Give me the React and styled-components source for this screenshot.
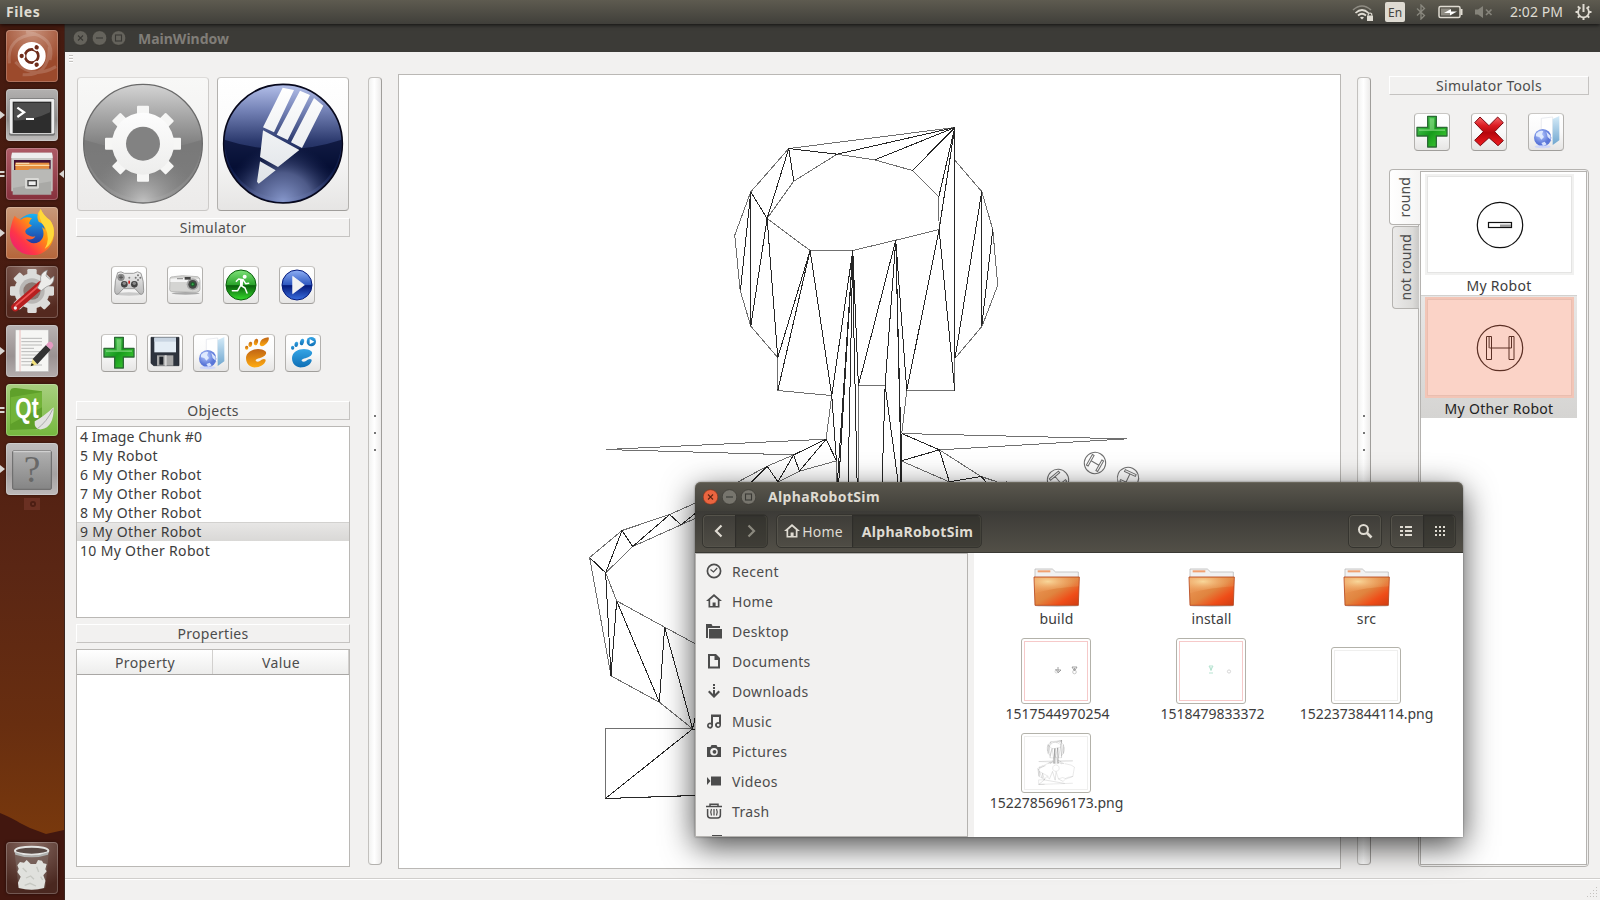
import React from 'react';
import styled, { createGlobalStyle, css } from 'styled-components';

const Global = createGlobalStyle`
  * { box-sizing: border-box; }
  body { margin: 0; background: #f2f1f0; overflow: hidden; font: 14px/19px "Noto Sans", "Open Sans", sans-serif; color: #4c4c4c; }
  svg { display: block; flex: none; }
`;

const Desktop = styled.div`
  width: 1600px; height: 900px; display: flex; flex-direction: column; position: relative; overflow: hidden;
`;
const Text = styled.span`
  white-space: nowrap; letter-spacing: ${p => p.$ls || 0}px; padding-left: ${p => p.$pl || 0}px;
`;

/* ---------- top panel ---------- */
const Panel = styled.header`
  height: 24px; flex: none; display: flex; align-items: center; justify-content: space-between;
  padding: 0 8px 0 6px; background: linear-gradient(#5e5b50, #403f3a); color: #dfdbd2;
  position: relative; box-shadow: 0 1px 4px rgba(0,0,0,.75); z-index: 1;
`;
const PanelTitle = styled(Text)`font-weight: 700; font-size: 14px; margin-top: -1px;`;
const Indicators = styled.div`display: flex; align-items: center; height: 24px;`;
const Indicator = styled.svg`margin-right: ${p => p.$gap}px;`;
const LangBadge = styled.span`
  width: 20px; height: 20px; margin-right: 11px; border-radius: 2px; background: #dfdbd2; color: #45443f;
  font: 12px/21px "Noto Sans", sans-serif; text-align: center;
`;
const Clock = styled(Text)`width: 53px; margin: -1px 12px 0 0; font-size: 14px;`;

/* ---------- body ---------- */
const Body = styled.div`flex: 1; display: flex; min-height: 0;`;
const Launcher = styled.nav`
  width: 65px; flex: none; position: relative; display: flex; flex-direction: column; align-items: flex-start;
  gap: 7px; padding: 6px 0 6px 6px; border-right: 1px solid #3b2620;
  background: linear-gradient(#461b10 0%, #4a1c11 40%, #5a2614 62%, #682e10 80%, #79390d 93%, #79390d 100%);
`;
const Ridge = styled.svg`position: absolute; left: 0; bottom: 0;`;
const LaunchRow = styled.div`
  position: relative; ${p => p.$end && 'margin-top: auto;'}
`;
const Tile = styled.div`
  width: 52px; height: 52px; border-radius: 4px; overflow: hidden; background: ${p => p.$bg};
  box-shadow: inset 0 0 0 1px rgba(255,255,255,.22), 0 0 3px rgba(0,0,0,.5);
`;
const Pip = styled.svg`position: absolute; left: -6px; top: 20px;`;
const PipRight = styled.svg`position: absolute; left: 53px; top: 21px;`;
const Ghost = styled.svg`margin: -4px 0 0 18px;`;

/* ---------- main window ---------- */
const MainWin = styled.main`flex: 1; min-width: 0; display: flex; flex-direction: column;`;
const TitleBar = styled.div`
  height: ${p => p.$h}px; flex: none; display: flex; align-items: center; gap: 4px; padding-left: 8px;
  background: ${p => (p.$active ? 'linear-gradient(#5a574e, #403f39)' : '#3c3b37')};
  color: ${p => (p.$active ? '#dfdbd2' : '#807d78')};
  font-weight: 700;
  ${p => p.$active && css`border-radius: 6px 6px 0 0; box-shadow: inset 0 1px 0 #6a675c;`}
`;
const TitleText = styled(Text)`margin-left: ${p => p.$ml}px;`;
const Work = styled.div`
  flex: 1; display: flex; align-items: flex-start; background: #f2f1f0; padding-left: 4px; position: relative;
`;
const Grip = styled.div`
  width: 4px; height: 9px; margin-top: 3px; margin-right: 3px;
  background: repeating-linear-gradient(#c4c2bf 0 1px, #fff 1px 2px, transparent 2px 3px);
`;
const Left = styled.section`width: 274px; margin-top: 25px; display: flex; flex-direction: column;`;
const Modes = styled.div`display: flex; gap: 8px; padding-left: 1px;`;
const Btn = styled.button`
  width: ${p => p.$w || 36}px; height: ${p => p.$h || 38}px; padding: 0; border-radius: 4px;
  border: 1px solid; border-color: ${p => (p.$dim ? '#dddbd9 #cdcbc9 #c8c6c4' : '#c9c7c4 #b3b1ae #a09e9b')};
  background: ${p => (p.$dim ? 'linear-gradient(#f8f8f7,#ecebea)' : 'linear-gradient(#fff,#fafafa 50%,#e6e5e4)')};
  display: flex; align-items: center; justify-content: center; overflow: hidden;
`;
const Caption = styled.div`
  height: 19px; margin-top: ${p => p.$mt || 0}px; text-align: center; line-height: 17px; letter-spacing: .3px;
  border: 1px solid; border-color: #fff #c5c3c1 #c5c3c1 #fff;
`;
const ButtonRow = styled.div`
  display: flex; gap: ${p => p.$gap}px; margin-top: ${p => p.$mt}px; padding-left: ${p => p.$pl}px;
`;
const List = styled.ul`
  list-style: none; margin: 6px 0 0; padding: 0; height: 192px; background: #fff; border: 1px solid #bab8b5; color: #3c3c3c;
`;
const Item = styled.li`
  height: 19px; line-height: 19px; padding-left: 3px;
  ${p => p.$on && 'background: linear-gradient(#e8e7e6, #d9d8d6); box-shadow: inset 0 1px #d2d1cf;'}
`;
const Table = styled.div`height: 218px; margin-top: 6px; background: #fff; border: 1px solid #bab8b5;`;
const TableHead = styled.div`
  height: 25px; display: grid; grid-template-columns: 136px 136px; text-align: center; line-height: 26px; letter-spacing: .4px;
  background: linear-gradient(#fff, #ededec); border-bottom: 1px solid #a9a7a5;
  span { border-right: 1px solid #d2d0ce; height: 24px; padding-left: 1px; }
`;
const Splitter = styled.div`
  width: 14px; height: 788px; margin: 25px 0 0 ${p => p.$ml}px; border: 1px solid; border-color: #c3c1be #a09e9b #b3b1ae #c3c1be;
  border-radius: 4px; background: linear-gradient(90deg, #f2f2f1, #fff 45%, #ecebea);
  display: flex; flex-direction: column; align-items: center; justify-content: center; gap: 15px; padding-bottom: 77px;
  i { width: 2px; height: 2px; background: #777; }
`;
const Canvas = styled.div`
  width: 943px; height: 795px; margin: 22px 0 0 16px; background: #fff; border: 1px solid #bab8b5;
`;
const Right = styled.section`width: 200px; margin: 24px 0 0 18px; display: flex; flex-direction: column;`;
const TabBox = styled.div`display: flex; margin-top: 18px; height: 698px;`;
const Tabs = styled.div`
  width: 31px; display: flex; flex-direction: column; align-items: flex-end; position: relative; z-index: 1;
`;
const Tab = styled.div`
  width: ${p => (p.$on ? 31 : 27)}px; height: ${p => p.$h}px; border: 1px solid #b5b3b0; border-right: 0;
  margin: ${p => (p.$on ? '0' : '1px 1px 0 0')};
  border-radius: 4px 0 0 4px; background: ${p => (p.$on ? 'linear-gradient(90deg,#fff,#f5f4f3)' : 'linear-gradient(90deg,#ebeae9,#dcdbd9 75%,#c9c8c6)')};
  display: flex; align-items: center; justify-content: center;
  span { writing-mode: vertical-rl; transform: rotate(180deg); line-height: 20px; letter-spacing: .1px; }
`;
const TabPane = styled.div`
  width: 171px; height: 698px; margin-left: -2px; border: 1px solid #b5b3b0; border-radius: 0 4px 4px 4px; padding: 1px; background: #f2f1f0;
`;
const TabInner = styled.div`
  width: 167px; height: 694px; border: 1px solid #b5b3b0; background: #fff;
`;
const Card = styled.div`
  width: 156px; height: 123px; padding: 2px 0 0 4px; color: ${p => (p.$on ? '#222' : '#3c3c3c')};
  ${p => p.$on && 'background: linear-gradient(#e8e7e6, #d5d4d2); box-shadow: inset 0 1px #d2d1cf;'}
`;
const Thumb = styled.div`
  width: 149px; height: 101px; border: 2px solid ${p => (p.$on ? '#f3c5b6' : '#f1f1f0')}; background: ${p => (p.$on ? '#fbd3c7' : '#fff')};
  box-shadow: inset 0 0 0 1px ${p => (p.$on ? '#e9beb0' : '#e4e4e3')}; display: flex; align-items: center; justify-content: center;
`;
const CardLabel = styled.div`text-align: center; margin-top: 1px; width: 148px; letter-spacing: .3px;`;
const StatusBar = styled.footer`
  height: 22px; flex: none; display: flex; justify-content: flex-end; align-items: flex-end; padding: 0 2px 2px 0;
  border-top: 1px solid #d0cecc; background: #f2f1f0; box-shadow: inset 0 1px #fff;
`;

/* ---------- file manager ---------- */
const Files = styled.section`
  position: absolute; left: 695px; top: 482px; width: 768px; height: 355px; display: flex; flex-direction: column;
  border-radius: 6px 6px 0 0; box-shadow: 0 9px 32px rgba(0,0,0,.72), 0 0 2px rgba(0,0,0,.5); z-index: 2;
`;
const Toolbar = styled.div`
  height: 42px; flex: none; display: flex; align-items: flex-start; padding: 3px 7px 0; color: #dfdbd2;
  background: linear-gradient(#3c3b37, #524f47); border-bottom: 1px solid #3a3934;
`;
const Group = styled.div`
  display: flex; height: 34px; margin-left: ${p => p.$ml || 0}px; border: 1px solid #35342f; border-radius: 5px;
  box-shadow: inset 0 0 0 1px #55534b; overflow: hidden;
`;
const Seg = styled.div`
  width: ${p => p.$w}px; display: flex; align-items: center; justify-content: center; gap: 2px;
  padding: 0 ${p => p.$pr || 0}px 0 ${p => p.$pl || 0}px;
  ${p => p.$press && 'background: rgba(35,34,30,.35); box-shadow: inset 1px 1px 1px #2e2d2a;'}
  ${p => p.$bold && 'font-weight: 700;'}
`;
const Split = styled.div`flex: 1; display: flex; min-height: 0; background: #fff;`;
const Places = styled.div`
  width: 273px; background: #f2f1f0; border: 1px solid #b5b3b0; padding: 2px 0 0 10px; overflow: hidden;
`;
const Place = styled.div`height: 30px; display: flex; align-items: center; gap: 10px;`;
const Gutter = styled.div`width: 6px; background: #f2f1f0;`;
const Grid = styled.div`
  display: grid; grid-template-columns: repeat(3, 155px); grid-template-rows: 75px 95px 89px; padding: 0 0 0 5px; color: #3c3c3c;
`;
const File = styled.div`display: flex; flex-direction: column; align-items: center; justify-content: flex-end;`;
const FolderArt = styled.svg`margin: 0 0 2px 0;`;
const Photo = styled.div`
  width: 70px; height: ${p => p.$h}px; padding: 2px; border: 1px solid #b3b2aa; border-radius: 3px; background: #fff; display: flex;
  margin-right: 2px;
  > div { flex: 1; border: 1px solid ${p => p.$edge}; }
`;

/* ---------- window control buttons ---------- */
const Control = ({ kind, active }) => {
  const close = active && kind === 'x';
  const fill = close ? '#ea6540' : active ? '#77756d' : '#65635c';
  const ink = close ? '#5f2512' : '#3a3935';
  return (
    <svg width="15" height="16" viewBox="0 0 15 16">
      <circle cx="7.5" cy="8" r="7.3" fill={fill} stroke={close ? '#8a3015' : '#35342f'} strokeWidth=".6" />
      <g stroke={ink} strokeWidth="1.1" fill="none">
        {kind === 'x' && <path d="M5 5.5l5 5M10 5.5l-5 5" />}
        {kind === '-' && <path d="M4 8h7" />}
        {kind === 'o' && <rect x="4.5" y="5" width="6" height="6" />}
      </g>
    </svg>
  );
};

/* ---------- wireframe mesh drawing ---------- */
const HEAD_SOFT = 'M686 115L1184 52M686 115L572 245L524 375L540 540L572 648L653 742V841L815 856M701 213L621 325L750 421H878L1007 390L1137 358L1136 260L1057 181L944 149L831 132L701 213M1184 52V150L1265 244L1298 358L1313 525L1266 648L1185 744M1184 744V841H1040M895 826H975M895 826V1116M815 856L798 987M1040 841L1025 970';
const HEAD_HARD = 'M686 115L831 132L1184 52M944 149L1184 52M1057 181L1184 52M1136 260L1184 52M1137 358L1184 52M1184 52V744M686 115L701 213M686 115L621 325L572 245M572 245L541 540M572 245V648L621 325L653 742L750 421M750 421L653 841M750 421L815 856L878 421M878 421L832 1116M878 421L836 1116M878 421L864 1116M878 421L880 600L891 1116M878 421L895 826L1007 390L975 826L966 1116M975 826L1014 1116M1007 390L1020 900V1116M1007 390L1024 1116M1007 390L1040 841L1137 358L1184 841M1265 244V648L1298 358M1265 244L1185 744M815 856L829 1052V1116';
const ARM_SOFT = 'M119 148L695 117M119 148L610 164L541 198L465 245M625 213L722 182M625 213L569 245M722 182V245M893 100L1480 116L991 149L1100 229L1142 245M891 182L1017 245';
const ARM_HARD = 'M695 117L610 164L625 213L695 117L722 182M610 164L569 245L541 198L500 245M893 100L991 149L891 182M893 100L891 245M991 149L1017 245L1100 229L1113 245';
const BODY_SOFT = 'M503 5L375 69L299 103L156 151L59 232L123 587L268 666L368 746M430 92L375 115L333 134L188 199L107 278L140 362L284 441L560 590M106 745H368M106 745V955M1308 5L1590 70L1740 160L1670 590L1400 640L1221 816M106 955L1668 900M890 60a150 150 0 1 0 10 0M900 360L1010 700L1200 640L1380 700L1668 590';
const BODY_HARD = 'M299 103L333 134L375 100M299 103L188 199L156 151L107 278L59 232M107 278L123 587L140 362L268 666L284 441L368 746L375 714L480 590L600 700L740 360L860 760L900 400M106 955L368 746L1300 910M106 955L375 946M1221 816L1000 700';

const Mesh = ({ soft = '#707070', hard = '#262626', ...rest }) => (
  <svg viewBox="399 75 941 793" fill="none" shapeRendering="crispEdges" {...rest}>
    {[
      ['translate(560.1 110.2) scale(.33333)', HEAD_SOFT, HEAD_HARD],
      ['translate(560.2 400.2) scale(.38265 .33333)', ARM_SOFT, ARM_HARD],
      ['translate(570 480.2) scale(.33333)', BODY_SOFT, BODY_HARD],
    ].map(([t, s, h]) => (
      <g key={t} transform={t}>
        <path d={s} stroke={soft} vectorEffect="non-scaling-stroke" />
        <path d={h} stroke={hard} vectorEffect="non-scaling-stroke" />
      </g>
    ))}
    <g stroke={soft} shapeRendering="auto">
      {[[1095, 463, 30], [1058, 480, 50], [1128, 478, 115]].map(([x, y, a]) => (
        <g key={x} transform={`translate(${x} ${y}) rotate(${a})`}>
          <circle r="10.7" />
          <path d="M-6.500 -6h2v12h-2zM4.500 -6h2v12h-2zM-4.500 0h9" />
        </g>
      ))}
    </g>
  </svg>
);

/* ---------- large mode icons ---------- */
const GearOrb = () => (
  <svg width="130" height="132" viewBox="234 235 390 396">
    <defs>
      <linearGradient id="gg" x2="0" y2="1"><stop offset="0" stopColor="#d4d4d4" /><stop offset=".25" stopColor="#a9a9a9" /><stop offset=".5" stopColor="#818181" /><stop offset="1" stopColor="#8b8b8b" /></linearGradient>
      <radialGradient id="gl" cx=".5" cy="1" r=".45"><stop offset="0" stopColor="#c2c2c2" /><stop offset="1" stopColor="#8a8a8a" stopOpacity="0" /></radialGradient>
      <linearGradient id="gw" x2="0" y2="1"><stop offset="0" stopColor="#fdfdfd" /><stop offset="1" stopColor="#ededec" /></linearGradient>
    </defs>
    <circle cx="429" cy="432" r="178" fill="url(#gg)" stroke="#6a6a6a" strokeWidth="4" />
    <path d="M252 420A177 177 0 0 0 606 420Q430 480 252 420Z" fill="#6e6e6e" opacity=".45" />
    <circle cx="429" cy="432" r="176" fill="url(#gl)" />
    <g fill="#f6f6f5">
      {[0, 45, 90, 135].map(a => <rect key={a} x="411" y="318" width="36" height="228" rx="3" transform={`rotate(${a} 429 432)`} />)}
      <circle cx="429" cy="432" r="93" fill="url(#gw)" />
    </g>
    <circle cx="429" cy="432" r="51" fill="#828282" />
  </svg>
);
const PencilOrb = () => (
  <svg width="130" height="132" viewBox="654 235 390 396">
    <defs>
      <linearGradient id="pg" x2="0" y2="1"><stop offset="0" stopColor="#b4c0ea" /><stop offset=".22" stopColor="#7482b6" /><stop offset=".48" stopColor="#2c3a6e" /><stop offset=".7" stopColor="#0b1845" /><stop offset="1" stopColor="#334178" /></linearGradient>
      <radialGradient id="pl" cx=".5" cy="1" r=".5"><stop offset="0" stopColor="#8798cc" /><stop offset=".5" stopColor="#5f6c9c" stopOpacity=".8" /><stop offset="1" stopColor="#1c2856" stopOpacity="0" /></radialGradient>
      <linearGradient id="pw" x2="0" y2="1"><stop offset="0" stopColor="#fff" /><stop offset="1" stopColor="#dfe3e7" /></linearGradient>
    </defs>
    <circle cx="849" cy="432" r="178" fill="url(#pg)" stroke="#07081c" strokeWidth="5" />
    <path d="M673 420A176 176 0 0 0 1025 420Q850 478 673 420Z" fill="#030b2c" opacity=".66" />
    <circle cx="849" cy="432" r="175" fill="url(#pl)" />
    <path fill="url(#pw)" d="M848 264L882 271L822 398L789 383ZM900 273L930 286L863 421L830 405ZM942 295L970 318L906 445L873 428ZM789 392L898 451L834 502L780 472ZM780 485L827 512L776 552L771 546Z" />
  </svg>
);

/* ---------- small button icons, drawn on a 108x114 board ---------- */
const Board = ({ children }) => <svg width="36" height="38" viewBox="0 0 108 114">{children}</svg>;
const Pad = () => (
  <Board>
    <defs><linearGradient id="pad" x2="0" y2="1"><stop offset="0" stopColor="#efefef" /><stop offset="1" stopColor="#b9b9b9" /></linearGradient></defs>
    <ellipse cx="54" cy="84" rx="40" ry="5" fill="#c9c9c9" />
    <path d="M20 20Q30 14 40 22H68Q80 13 90 22Q99 44 98 74Q97 88 87 84L72 68H37L22 84Q12 88 11 74Q11 42 20 20Z" fill="url(#pad)" stroke="#8a8a8a" strokeWidth="2.500" />
    <circle cx="30" cy="34" r="11" fill="#8c8c8c" /><circle cx="40" cy="55" r="10" fill="#444" /><circle cx="70" cy="55" r="10" fill="#444" />
    <circle cx="40" cy="52" r="5" fill="#8b8b8b" /><circle cx="70" cy="52" r="5" fill="#8b8b8b" />
    <circle cx="81" cy="28" r="3" fill="#777" /><circle cx="88" cy="35" r="3" fill="#777" /><circle cx="74" cy="35" r="3" fill="#777" /><circle cx="81" cy="42" r="3" fill="#777" />
    <circle cx="55" cy="35" r="3" fill="#888" /><rect x="52" y="44" width="5" height="9" fill="#c22" />
    <path d="M24 34h12M30 28v12" stroke="#555" strokeWidth="3" />
  </Board>
);
const Cam = () => (
  <Board>
    <ellipse cx="56" cy="82" rx="42" ry="4" fill="#a9a9a9" />
    <path d="M9 36Q10 32 20 32L46 29L92 32Q99 34 99 44V70Q98 78 88 79L14 77Q8 76 8 70Z" fill="#d4d4d2" stroke="#a5a5a3" strokeWidth="2" />
    <path d="M10 38Q50 33 97 39V48H10Z" fill="#f4f4f4" />
    <circle cx="77" cy="55" r="18" fill="#a8a8a8" /><circle cx="77" cy="55" r="13" fill="#454745" /><circle cx="77" cy="55" r="7" fill="#1f5c2c" /><circle cx="77" cy="55" r="3" fill="#35b04d" />
    <rect x="53" y="33" width="18" height="8" fill="#444" /><path d="M30 38h18" stroke="#999" strokeWidth="4" />
  </Board>
);
const Orb = ({ id, hi, mid, lo, glow, children }) => (
  <Board>
    <defs>
      <linearGradient id={id} x2="0" y2="1"><stop offset="0" stopColor={hi} /><stop offset=".5" stopColor={mid} /><stop offset=".52" stopColor={lo} /><stop offset="1" stopColor={glow} /></linearGradient>
    </defs>
    <circle cx="54" cy="57" r="45" fill={`url(#${id})`} stroke={lo} strokeWidth="3" />
    {children}
  </Board>
);
const Run = () => (
  <Orb id="ru" hi="#7fe37a" mid="#2aa32a" lo="#0a5f0c" glow="#35dc2c">
    <circle cx="65" cy="32" r="6" fill="#fff" />
    <path d="M40 46L47 39L60 41L68 53L77 52M58 42L53 58L66 66L72 81M53 58L44 74L28 74" fill="none" stroke="#fff" strokeWidth="4.500" strokeLinejoin="round" strokeLinecap="round" />
    <path d="M51 40L61 40L59 60L51 60Z" fill="#fff" />
  </Orb>
);
const Play = () => (
  <Orb id="pp" hi="#8fb0f5" mid="#2c56bf" lo="#04197a" glow="#3a6fe0">
    <path d="M41 31L76 57L41 83Z" fill="#f1f1f1" stroke="#fff" strokeWidth="2" />
  </Orb>
);
const Plus = () => (
  <Board>
    <defs><linearGradient id="pls" x2="1" y2="1"><stop offset="0" stopColor="#5fd66a" /><stop offset=".5" stopColor="#159a1b" /><stop offset="1" stopColor="#49d63a" /></linearGradient></defs>
    <path d="M41 10H67V43H99V69H67V102H41V69H9V43H41Z" fill="url(#pls)" stroke="#2c6b35" strokeWidth="4" strokeLinejoin="round" />
    <path d="M47 16H61V49H93V54H15V49H47Z" fill="#b6f3ae" opacity=".45" />
  </Board>
);
const Cross = () => (
  <Board>
    <defs><linearGradient id="crs" x2="0" y2="1"><stop offset="0" stopColor="#f4696b" /><stop offset=".3" stopColor="#dc1c22" /><stop offset=".55" stopColor="#b5060c" /><stop offset="1" stopColor="#f01c20" /></linearGradient></defs>
    <path d="M27 12L54 38L80 12L97 29L71 56L97 83L81 98L54 74L28 98L11 82L37 56L11 29Z" fill="url(#crs)" stroke="#7c0b12" strokeWidth="3" strokeLinejoin="round" />
  </Board>
);
const Floppy = () => (
  <Board>
    <path d="M12 10H96V95H20L12 88Z" fill="#2d333d" stroke="#1e232b" strokeWidth="2" />
    <rect x="22" y="11" width="65" height="44" fill="#e4edf5" /><rect x="22" y="11" width="65" height="12" fill="#c9d5e2" />
    <rect x="30" y="64" width="49" height="31" fill="#a8a8a8" /><rect x="37" y="68" width="12" height="24" fill="#20242b" /><path d="M56 64v31" stroke="#d7d7d7" strokeWidth="6" />
  </Board>
);
const Globe = () => (
  <Board>
    <defs>
      <linearGradient id="gf" x2="0" y2="1"><stop offset="0" stopColor="#d5ebf8" /><stop offset="1" stopColor="#6fa6cf" /></linearGradient>
      <radialGradient id="gb" cx=".4" cy=".35"><stop offset="0" stopColor="#b9ccff" /><stop offset="1" stopColor="#5a76d8" /></radialGradient>
    </defs>
    <path d="M40 16L74 12V82L40 86Z" fill="#fff" stroke="#dfe3e8" strokeWidth="2" />
    <path d="M74 18L94 9V82L74 96Z" fill="url(#gf)" />
    <circle cx="44" cy="74" r="26" fill="url(#gb)" />
    <path d="M24 62q10-12 22-8l-4 10 6 8-8 8-6-8-10-2zM55 56l13 12v12l-9-8zM40 90l10-4 6 8-10 5z" fill="#e6eeff" opacity=".9" />
    <ellipse cx="44" cy="101" rx="24" ry="5" fill="#c5d0ff" opacity=".7" />
  </Board>
);
const Foot = ({ id, a, b, play }) => (
  <Board>
    <defs><linearGradient id={id} x2="0" y2="1"><stop offset="0" stopColor={a} /><stop offset="1" stopColor={b} /></linearGradient></defs>
    <g fill={`url(#${id})`}>
      <path d="M79 52C62 38 22 46 21 72C21 92 36 102 52 100C70 98 81 86 80 77C75 73 69 76 64 80C57 85 49 83 50 78C53 72 68 73 77 65C82 60 83 56 79 52Z" />
      <ellipse cx="23" cy="41" rx="5" ry="6" /><ellipse cx="34" cy="31" rx="5.500" ry="8" transform="rotate(15 34 31)" /><ellipse cx="51" cy="24" rx="6" ry="10" transform="rotate(15 51 24)" />
      {play ? <circle cx="79" cy="23" r="14" /> : <path d="M62 30Q64 12 88 10Q92 14 86 24Q78 36 68 37Q62 36 62 30Z" />}
    </g>
    {play && <path d="M74 15L88 23L74 31Z" fill="#fff" />}
  </Board>
);

/* ---------- launcher icons, on a 156x156 board ---------- */
const L = ({ children }) => <svg width="52" height="52" viewBox="0 0 156 156">{children}</svg>;
const Dash = () => (
  <L>
    <g fill="none" stroke="#fff" opacity=".16" strokeWidth="9"><path d="M10 100Q0 20 90 12" /><path d="M60 6Q150 20 132 90" /><path d="M150 110Q80 150 28 96" /><path d="M130 50Q130 140 50 134" /></g>
    <circle cx="77" cy="78" r="42" fill="#fff" />
    <circle cx="77" cy="78" r="20" fill="none" stroke="#6e2c1a" strokeWidth="8" />
    {[60, 180, 300].map(a => <g key={a} transform={`rotate(${a} 77 78)`}><circle cx="106" cy="78" r="10" fill="#fff" /><circle cx="107" cy="78" r="6.500" fill="#6e2c1a" /></g>)}
  </L>
);
const Term = () => (
  <L>
    <rect x="9" y="28" width="138" height="112" rx="6" fill="#777" /><rect x="11" y="30" width="134" height="104" rx="4" fill="#eee" />
    <rect x="20" y="38" width="116" height="94" fill="#2d2d2d" /><path d="M24 42H132V70Q80 96 24 94Z" fill="#555" opacity=".8" />
    <path d="M34 56L54 70L34 84" fill="none" stroke="#fff" strokeWidth="7" /><path d="M60 90H84" stroke="#fff" strokeWidth="6" />
  </L>
);
const Cabinet = () => (
  <L>
    <path d="M18 14H138L140 26V130H16V26Z" fill="#c9c9c6" /><path d="M18 14H138L140 30H16Z" fill="#eee" />
    <rect x="24" y="36" width="110" height="32" fill="#413" /><rect x="28" y="44" width="102" height="26" fill="#e58c3c" /><path d="M28 52H130M30 46H70" stroke="#fbd9a4" strokeWidth="4" />
    <path d="M20 66H66L72 62H136V140H20Z" fill="#a9a9a6" /><path d="M20 66H136V100L20 120Z" fill="#b9b9b6" />
    <rect x="57" y="90" width="42" height="32" rx="4" fill="#d9d9d6" /><rect x="66" y="98" width="25" height="15" fill="#eee" stroke="#444" strokeWidth="4" />
  </L>
);
const Fox = () => (
  <L>
    <defs>
      <linearGradient id="fx" x1="1" y1="0" x2="0" y2="1"><stop offset="0" stopColor="#fff44f" /><stop offset=".4" stopColor="#ff980e" /><stop offset=".7" stopColor="#ff3647" /><stop offset="1" stopColor="#e31587" /></linearGradient>
      <linearGradient id="fb" x2="0" y2="1"><stop offset="0" stopColor="#18b3f5" /><stop offset="1" stopColor="#24309a" /></linearGradient>
    </defs>
    <circle cx="80" cy="68" r="48" fill="url(#fb)" />
    <path d="M26 26Q34 36 44 38Q60 26 78 34Q68 42 70 50L78 56Q68 62 62 66Q52 76 66 84Q78 92 88 88Q80 102 60 96Q76 116 100 104Q120 90 108 60Q112 62 116 68Q116 50 98 44Q88 24 104 6Q112 26 132 40Q146 58 144 84Q138 130 96 143Q48 150 24 118Q4 90 16 54Q18 40 26 26Z" fill="url(#fx)" />
    <path d="M104 6Q112 26 132 40Q146 58 143 84Q138 112 116 126Q134 96 118 62Q92 34 104 6Z" fill="#ffd93a" />
  </L>
);
const Settings = () => (
  <L>
    <g fill="#dcdcda">{[0, 45, 90, 135].map(a => <rect key={a} x="64" y="9" width="28" height="132" rx="4" transform={`rotate(${a} 78 75)`} />)}<circle cx="78" cy="75" r="53" /></g>
    <circle cx="78" cy="75" r="38" fill="#b9b7b5" /><circle cx="78" cy="75" r="26" fill="#8a7771" />
    <path d="M28 124L104 58" stroke="#b71f1f" strokeWidth="24" strokeLinecap="round" /><path d="M30 118L98 60" stroke="#e55" strokeWidth="5" strokeLinecap="round" />
    <circle cx="28" cy="126" r="5" fill="#eee" />
    <path d="M94 66L104 46Q100 20 124 12L120 30L132 40L144 30Q146 56 122 62L106 74Z" fill="#ececea" stroke="#888" strokeWidth="2" />
  </L>
);
const Gedit = () => (
  <L>
    <path d="M28 14H128V140H28Z" fill="#f6f6f4" stroke="#aaa" strokeWidth="2" /><path d="M42 14V140" stroke="#e9a0a0" strokeWidth="2" />
    {[40, 50, 60, 70, 80, 90, 100, 110, 120].map((y, i) => <path key={y} d={`M46 ${y}H${i % 4 === 3 ? 84 : 108}`} stroke="#9a9a9a" strokeWidth="2" />)}
    <path d="M74 124L80 102L94 118Z" fill="#f3e27a" /><path d="M80 102L120 60L134 74L94 118Z" fill="#333" /><path d="M120 60L128 51Q140 48 142 62L134 74Z" fill="#e59ac2" /><path d="M74 124L77 114L84 120Z" fill="#222" />
  </L>
);
const QtLogo = () => (
  <L>
    <path d="M12 22Q14 10 30 12L108 22V134L12 138Z" fill="#5fa02a" /><path d="M14 40L108 24V70L14 120Z" fill="#7fc043" opacity=".6" />
    <text x="28" y="101" fontFamily="Liberation Sans" fontWeight="700" fontSize="86" fill="#fff" textLength="70" lengthAdjust="spacingAndGlyphs">Qt</text>
    <path d="M143 70Q144 130 106 136Q84 138 86 112Q110 100 143 70Z" fill="#e2e2e0" /><path d="M140 76Q124 112 92 136" fill="none" stroke="#aaa" strokeWidth="3" />
  </L>
);
const Unknown = () => (
  <L>
    <defs><linearGradient id="uk" x2="0" y2="1"><stop offset="0" stopColor="#b0b0b0" /><stop offset="1" stopColor="#858585" /></linearGradient></defs>
    <rect x="20" y="24" width="116" height="115" rx="3" fill="url(#uk)" stroke="#666" strokeWidth="3" />
    <path d="M22 26H134" stroke="#ddd" strokeWidth="3" />
    <text x="78" y="117" textAnchor="middle" fontFamily="Liberation Serif" fontSize="112" fill="#686868">?</text>
  </L>
);
const Bin = () => (
  <L>
    <path d="M26 34L38 138Q78 150 118 138L128 34Z" fill="#8d8682" opacity=".35" />
    <path d="M34 70L42 60L54 62L62 54L74 66L90 66L96 54L108 56L112 64L122 66L118 82L122 88L112 100L118 116L114 138Q78 148 38 138L36 122L44 104L34 90L38 80Z" fill="#e0e1dd" />
    <path d="M50 78L62 90M92 74L98 90M60 108L74 102L84 112M104 104L110 114M56 130L72 124L90 132" stroke="#c6c8c2" strokeWidth="4" fill="none" />
    <ellipse cx="77" cy="26" rx="50" ry="12" fill="#5a4a45" stroke="#e4e4e2" strokeWidth="6" /><path d="M26 30Q76 52 128 30L126 38Q76 54 28 38Z" fill="#b0b2b0" />
  </L>
);
const APPS = [
  { Icon: Dash, bg: 'radial-gradient(circle at 50% 0,#c9937c,#9c4a2d 65%)' },
  { Icon: Term, bg: 'linear-gradient(#b3b1b0,#8d8b8a 60%,#c0bebd)', pip: 1 },
  { Icon: Cabinet, bg: 'linear-gradient(#ad5b66,#86303c)', pip: 2, focus: true },
  { Icon: Fox, bg: 'linear-gradient(#c99a7a,#b5653a)', pip: 1 },
  { Icon: Settings, bg: 'radial-gradient(circle at 50% 0,#8d6f66,#54291f 80%)' },
  { Icon: Gedit, bg: 'linear-gradient(#b9b3b3,#9a9292 60%,#b4adad)', pip: 1 },
  { Icon: QtLogo, bg: 'linear-gradient(#a9cf80,#75b83e)', pip: 2 },
  { Icon: Unknown, bg: 'linear-gradient(#bfbdbd,#a5a2a2 60%,#bdbaba)', pip: 1 },
];

/* ---------- sidebar icons ---------- */
const HomeShape = <path d="M8 1L0 8h2.500v6.500h11V8H16zM8 3.400l3.800 3.400v6.200H9.600V9.500H6.600v3.500H4.200V6.800z" fillRule="evenodd" />;
const PLACES = [
  ['Recent', <g key="i" fill="none" stroke="currentColor"><circle cx="8" cy="8" r="6.600" strokeWidth="1.700" /><path d="M4.500 6.500l3 2.500 3.700-4" strokeWidth="1.200" /></g>],
  ['Home', HomeShape],
  ['Desktop', <path key="i" d="M0 1h5.500l1 2H14v2H2v10H0zM3 6h13v9.500H3z" />],
  ['Documents', <path key="i" fillRule="evenodd" d="M2 1h8l4 4v10.500H2zM4 3v10.500h8V7H8.500V3z" />],
  ['Downloads', <path key="i" d="M7 1h2v2H7zM7 4h2v2H7zM7 7h2v4l3.500-3.500L14 9l-6 6-6-6 1.500-1.500L7 11z" />],
  ['Music', <path key="i" fillRule="evenodd" d="M5 1.500h10V12a3 3 0 1 1-2-2.800V4H7v8.500A3 3 0 1 1 5 9.800zM4 11.300a1.300 1.300 0 1 0 0 2.600 1.300 1.300 0 0 0 0-2.600zM12.200 10.800a1.300 1.300 0 1 0 0 2.600 1.300 1.300 0 0 0 0-2.600z" />],
  ['Pictures', <path key="i" fillRule="evenodd" d="M1 4h3.500L5.500 2h5l1 2H15v10H1zM8 5a3.800 3.800 0 1 0 0 7.600A3.800 3.800 0 0 0 8 5zM8 7a1.900 1.900 0 1 1 0 3.700A1.900 1.900 0 0 1 8 7z" />],
  ['Videos', <path key="i" d="M5 3.500h10v9H5zM1 4l3.500 4L1 12z" />],
  ['Trash', <g key="i" fill="none" stroke="currentColor" strokeWidth="1.500"><path d="M0 3.500h16M4 3V1.200h8V3M1.600 6v6q0 3 3 3h6.800q3 0 3-3V6" /><path d="M5.500 6q-1.500 3 0 6.500M10.500 6q1.500 3 0 6.500M8 6v6.500" strokeWidth="1.200" /></g>],
  ['Network', <path key="i" d="M6 2h10v10H6z" />],
];

const Folder = () => (
  <FolderArt width="48" height="40" viewBox="0 0 144 120">
    <defs>
      <linearGradient id="fd" x2="1" y2="1"><stop offset="0" stopColor="#f0a060" /><stop offset=".5" stopColor="#e0843f" /><stop offset=".75" stopColor="#ef4d18" /><stop offset="1" stopColor="#cf3c12" /></linearGradient>
      <radialGradient id="fh" cx=".3" cy=".25" r=".65"><stop offset="0" stopColor="#f8d79a" /><stop offset="1" stopColor="#f0a868" stopOpacity=".25" /></radialGradient>
    </defs>
    <path d="M6 34V6H58L68 15H136V34Z" fill="#f1f1f1" stroke="#bdbdbd" strokeWidth="2.500" /><path d="M14 13H52" stroke="#f0a070" strokeWidth="6" />
    <ellipse cx="72" cy="116" rx="66" ry="4" fill="#ccc" />
    <path d="M3 30H139L136 115H6Z" fill="url(#fd)" stroke="#b5451c" strokeWidth="2.500" />
    <path d="M5 32H137V58Q70 62 6 78Z" fill="url(#fh)" />
  </FolderArt>
);

const FilesWindow = () => (
  <Files>
    <TitleBar $h={29} $active>
      <Control kind="x" active /><Control kind="-" active /><Control kind="o" active />
      <TitleText $ml={8} $ls={0.35}>AlphaRobotSim</TitleText>
    </TitleBar>
    <Toolbar>
      <Group>
        <Seg $w={32}><svg width="12" height="14" viewBox="0 0 12 14" fill="none" stroke="currentColor" strokeWidth="2.200"><path d="M8.500 1.500L3 7l5.500 5.500" /></svg></Seg>
        <Seg $w={32} $press><svg width="12" height="14" viewBox="0 0 12 14" fill="none" stroke="#8b897f" strokeWidth="2.200"><path d="M3.500 1.500L9 7l-5.500 5.500" /></svg></Seg>
      </Group>
      <Group $ml={8}>
        <Seg $w={75} $pr={2}><svg width="16" height="16" viewBox="0 0 16 16" fill="currentColor">{HomeShape}</svg><Text $ls={0.2}>Home</Text></Seg>
        <Seg $w={129} $press $bold $pl={2}><Text $ls={0.3}>AlphaRobotSim</Text></Seg>
      </Group>
      <Group $ml={366}>
        <Seg $w={32} $pr={1}><svg width="16" height="16" viewBox="0 0 16 16" fill="none" stroke="currentColor"><circle cx="6.500" cy="6.500" r="4.500" strokeWidth="2" /><path d="M10 10l4.500 4.500" strokeWidth="2.600" /></svg></Seg>
      </Group>
      <Group $ml={8}>
        <Seg $w={32} $pr={2}><svg width="12" height="12" viewBox="0 0 12 12" fill="currentColor"><path d="M0 1h3v2H0zM5 1h7v2H5zM0 5h3v2H0zM5 5h7v2H5zM0 9h3v2H0zM5 9h7v2H5z" /></svg></Seg>
        <Seg $w={32} $pl={3} $press><svg width="11" height="12" viewBox="0 0 11 12" fill="currentColor"><path d="M0 1h2v2H0zM4 1h2v2H4zM8 1h2v2H8zM0 5h2v2H0zM4 5h2v2H4zM8 5h2v2H8zM0 9h2v2H0zM4 9h2v2H4zM8 9h2v2H8z" /></svg></Seg>
      </Group>
    </Toolbar>
    <Split>
      <Places>
        {PLACES.map(([name, icon]) => (
          <Place key={name}><svg width="16" height="16" viewBox="0 0 16 16" fill="currentColor">{icon}</svg><Text $ls={0.35}>{name}</Text></Place>
        ))}
      </Places>
      <Gutter />
      <Grid>
        {['build', 'install', 'src'].map(n => <File key={n}><Folder /><Text $ls={0.15}>{n}</Text></File>)}
        <File>
          <Photo $h={66} $edge="#f6c9c9"><div><svg width="62" height="58" viewBox="0 0 62 58"><g fill="none" stroke="#8a8a8a" strokeWidth=".8"><path d="M31 27l2 4 3-3M33 25v5M30 28h6M47 25h5l-2.500 4zM49.500 26v3" /><circle cx="31.500" cy="29.500" r="1.500" stroke="#ccc" /><circle cx="49.500" cy="30" r="1.800" stroke="#bbb" /></g></svg></div></Photo>
          <Text $pl={2}>1517544970254</Text>
        </File>
        <File>
          <Photo $h={66} $edge="#f6c9c9"><div><svg width="62" height="58" viewBox="0 0 62 58"><path d="M29 24h4l-2 4zM31 25v4M29 31h4" stroke="#a5dcc5" strokeWidth=".8" fill="none" /><circle cx="49" cy="29.500" r="1.600" fill="none" stroke="#ccc" strokeWidth=".8" /></svg></div></Photo>
          <Text $pl={2}>1518479833372</Text>
        </File>
        <File><Photo $h={57} $edge="#efefee"><div /></Photo><Text>1522373844114.png</Text></File>
        <File>
          <Photo $h={60} $edge="#efefee"><div><Mesh width="62" height="52" soft="rgba(90,90,90,.13)" hard="rgba(40,40,40,.12)" shapeRendering="auto" /></div></Photo>
          <Text>1522785696173.png</Text>
        </File>
      </Grid>
    </Split>
  </Files>
);

const OBJECTS = [
  ['4 Image Chunk #0', 0.1], ['5 My Robot', 0.35], ['6 My Other Robot', 0.33], ['7 My Other Robot', 0.33],
  ['8 My Other Robot', 0.33], ['9 My Other Robot', 0.33], ['10 My Other Robot', 0.33],
];

export default function App() {
  return (
    <Desktop>
      <Global />
      <Panel>
        <PanelTitle $ls={0.6}>Files</PanelTitle>
        <Indicators>
          <Indicator $gap={11} width="22" height="20" viewBox="0 0 22 20" fill="none" stroke="#dfdbd2">
            <path d="M1 8Q10 0 19 8" stroke="#8f8c83" strokeWidth="1.600" /><path d="M3.500 11Q10 5 16.500 11M6 13.500Q10 10 14 13.500" strokeWidth="1.700" /><path d="M8 15.500l2 2 2-2q-2-1.500-4 0z" fill="#dfdbd2" stroke="none" />
            <rect x="15" y="13.500" width="6" height="5.500" fill="#dfdbd2" stroke="none" /><path d="M16.300 13.500v-1.500q1.700-2 3.400 0v1.500" strokeWidth="1.200" />
          </Indicator>
          <LangBadge>En</LangBadge>
          <Indicator $gap={12} width="10" height="16" viewBox="0 0 10 16" fill="none" stroke="#8a887f" strokeWidth="1.300"><path d="M1 4.500l7.500 7L5 15V1l3.500 3.500L1 11.500" /></Indicator>
          <Indicator $gap={12} width="25" height="14" viewBox="0 0 25 14">
            <rect x="1" y="1.500" width="21" height="11" rx="1.500" fill="none" stroke="#dfdbd2" strokeWidth="1.500" /><rect x="3" y="3.500" width="9" height="7" fill="#8f8c83" /><rect x="22.500" y="4" width="2" height="6" fill="#dfdbd2" /><path d="M6 8l7-4v2.500h6L12 10.500V8z" fill="#fff" />
          </Indicator>
          <Indicator $gap={16} width="19" height="14" viewBox="0 0 19 14" fill="#85837a"><path d="M0 4.500h3L8 1v12L3 9.500H0z" /><path d="M11 4.500l5.500 5.500M16.500 4.500L11 10" stroke="#85837a" strokeWidth="1.700" /></Indicator>
          <Clock $ls={0.05}>2:02 PM</Clock>
          <svg width="17" height="18" viewBox="-8.500 -9 17 18" fill="none" stroke="#dfdbd2">
            <path d="M-3 -4.500A5.400 5.400 0 1 0 3 -4.500" strokeWidth="1.800" /><path d="M0 -8V0" strokeWidth="2" />
            {[45, 90, 135, 180, 225, 270, 315].map(a => <path key={a} d="M0 -5.500V-8" strokeWidth="2" transform={`rotate(${a})`} />)}
          </svg>
        </Indicators>
      </Panel>
      <Body>
        <Launcher>
          <Ridge width="64" height="90" viewBox="0 0 64 90"><path d="M0 3Q12 8 20 13L30 18L46 24L64 20V90H0Z" fill="#42170f" /></Ridge>
          {APPS.map(({ Icon, bg, pip, focus }, i) => (
            <LaunchRow key={i}>
              <Tile $bg={bg}><Icon /></Tile>
              {pip === 1 && <Pip width="6" height="12" viewBox="0 0 6 12"><path d="M0 2L5 6L0 10Z" fill="#d9d5d2" /></Pip>}
              {pip === 2 && <Pip width="6" height="12" viewBox="0 0 6 12"><path d="M0 3h4l1 1-1 1H0zM0 7h4l1 1-1 1H0z" fill="#d9d5d2" /></Pip>}
              {focus && <PipRight width="5" height="10" viewBox="0 0 5 10"><path d="M5 1L0 5L5 9Z" fill="#d9d5d2" /></PipRight>}
            </LaunchRow>
          ))}
          <Ghost width="16" height="13" viewBox="0 0 16 13"><rect width="16" height="12" fill="#6a3022" /><circle cx="9" cy="6" r="3" fill="#4c1e13" /><circle cx="9" cy="6" r="1" fill="#70392b" /></Ghost>
          <LaunchRow $end><Tile $bg="radial-gradient(circle at 50% 0,#876a62,#4a2820 80%)"><Bin /></Tile></LaunchRow>
        </Launcher>
        <MainWin>
          <TitleBar $h={28}>
            <Control kind="x" /><Control kind="-" /><Control kind="o" />
            <TitleText $ml={8}>MainWindow</TitleText>
          </TitleBar>
          <Work>
            <Grip />
            <Left>
              <Modes>
                <Btn $w={132} $h={134} $dim><GearOrb /></Btn>
                <Btn $w={132} $h={134}><PencilOrb /></Btn>
              </Modes>
              <Caption $mt={7}>Simulator</Caption>
              <ButtonRow $gap={20} $mt={29} $pl={35}>
                <Btn><Pad /></Btn><Btn><Cam /></Btn><Btn><Run /></Btn><Btn><Play /></Btn>
              </ButtonRow>
              <ButtonRow $gap={10} $mt={30} $pl={25}>
                <Btn><Plus /></Btn><Btn><Floppy /></Btn><Btn><Globe /></Btn>
                <Btn><Foot id="fo" a="#c06414" b="#ffab10" /></Btn><Btn><Foot id="fbl" a="#35a5e6" b="#0f6fb5" play /></Btn>
              </ButtonRow>
              <Caption $mt={29}>Objects</Caption>
              <List>{OBJECTS.map(([o, ls], i) => <Item key={o} $on={i === 5}><Text $ls={ls}>{o}</Text></Item>)}</List>
              <Caption $mt={6}>Properties</Caption>
              <Table><TableHead><span>Property</span><span>Value</span></TableHead></Table>
            </Left>
            <Splitter $ml={18}><i /><i /><i /></Splitter>
            <Canvas><Mesh width="941" height="793" /></Canvas>
            <Splitter $ml={16}><i /><i /><i /></Splitter>
            <Right>
              <Caption>Simulator Tools</Caption>
              <ButtonRow $gap={21} $mt={18} $pl={25}><Btn><Plus /></Btn><Btn><Cross /></Btn><Btn><Globe /></Btn></ButtonRow>
              <TabBox>
                <Tabs><Tab $on $h={56}><span>round</span></Tab><Tab $h={83}><span>not round</span></Tab></Tabs>
                <TabPane>
                  <TabInner>
                    <Card>
                      <Thumb><svg width="50" height="50" viewBox="-25 -25 50 50" fill="none" stroke="#111"><circle r="22.700" strokeWidth="1.200" /><rect x="-11.500" y="-2.500" width="23" height="5" strokeWidth="1.200" /><rect x="0" y="-.5" width="11" height="2.500" fill="#999" stroke="none" /></svg></Thumb>
                      <CardLabel>My Robot</CardLabel>
                    </Card>
                    <Card $on>
                      <Thumb $on><svg width="50" height="50" viewBox="-25 -25 50 50" fill="none" stroke="#5c3025"><circle r="22.700" strokeWidth="1.200" /><path d="M-13.500 -11.500h5v23h-5zM-10.900 -11.500V0M9 -11.500h5v23h-5zM11.500 -11.500V0M-10.500 0H11.500" /></svg></Thumb>
                      <CardLabel>My Other Robot</CardLabel>
                    </Card>
                  </TabInner>
                </TabPane>
              </TabBox>
            </Right>
          </Work>
          <StatusBar>
            <svg width="11" height="11" viewBox="0 0 11 11" fill="#c4c2bf"><path d="M9 0h1v1H9zM6 3h1v1H6zM9 3h1v1H9zM3 6h1v1H3zM6 6h1v1H6zM9 6h1v1H9zM0 9h1v1H0zM3 9h1v1H3zM6 9h1v1H6zM9 9h1v1H9z" /></svg>
          </StatusBar>
        </MainWin>
      </Body>
      <FilesWindow />
    </Desktop>
  );
}
